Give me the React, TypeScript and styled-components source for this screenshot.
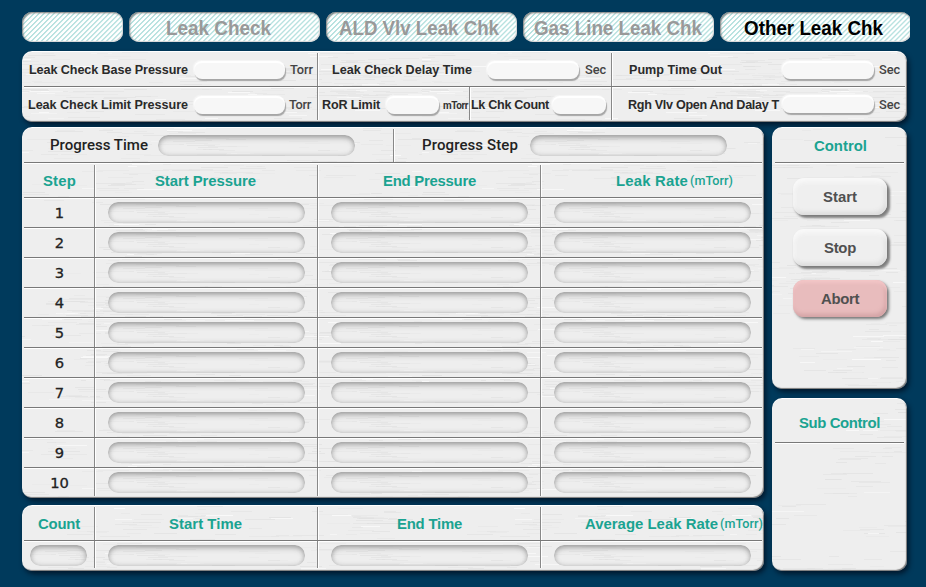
import React, { useLayoutEffect, useRef, useState } from "react";
import styled, { createGlobalStyle, css } from "styled-components";

/** Brushed-metal tile: short one-pixel streaks gathered in loose clusters. */
const brushed = (seed: number) => {
  let state = seed * 7919 + 17;
  const rnd = () => {
    state = (state * 1103515245 + 12345) % 2147483648;
    return state / 2147483648;
  };
  let streaks = "";
  for (let c = 0; c < 110; c++) {
    const cx = rnd() * 400;
    const cy = rnd() * 300;
    for (let i = 0; i < 7; i++) {
      const x = Math.round(cx + (rnd() - 0.5) * 50);
      const y = Math.round(cy + (rnd() - 0.5) * 22);
      const w = Math.round(8 + rnd() * 24);
      const light = rnd() < 0.14;
      const opacity = (light ? 0.25 + rnd() * 0.4 : 0.2 + rnd() * 0.5).toFixed(2);
      streaks += `<rect x='${x}' y='${y}' width='${w}' height='1' fill='${light ? "#fff" : "#e0e0e0"}' opacity='${opacity}'/>`;
    }
  }
  const svg = `<svg xmlns='http://www.w3.org/2000/svg' width='400' height='300'>${streaks}</svg>`;
  return `url("data:image/svg+xml,${encodeURIComponent(svg)}")`;
};

const slotTexture = brushed(31);

const GlobalStyle = createGlobalStyle`
  html, body { margin: 0; background: #003a5c; overflow: hidden; }
  * { box-sizing: border-box; }
`;

const Screen = styled.div`
  width: 926px;
  height: 587px;
  padding: 12px 16px 0 22px;
  background: #003a5c;
  font-family: "Liberation Sans", Arial, sans-serif;
  overflow: hidden;
`;

const Tabs = styled.nav`
  display: grid;
  grid-template-columns: 101px repeat(4, 191px);
  column-gap: 6px;
  height: 30px;
  width: 888px;
  overflow: hidden;
`;

const Tab = styled.button<{ $active?: boolean; $shift?: number }>`
  display: flex;
  justify-content: center;
  align-items: center;
  padding: 1px ${(p) => p.$shift ?? 0}px 0 0;
  border: 0;
  border-radius: 10px;
  background: repeating-linear-gradient(135deg, #fff 0 1.75px, #b9e2e0 2.1px 3.1px, #fff 3.54px);
  box-shadow: inset 1px 1px 2px #777, inset -1px -1px 1px #ddd;
  color: ${(p) => (p.$active ? "#000" : "#999")};
  font: bold 20px/28px "Liberation Sans", Arial, sans-serif;
`;

const Panel = styled.section<{ $seed: number }>`
  padding: 2px 2px 0;
  border-radius: 10px;
  background: ${(p) => brushed(p.$seed)}, #eee;
  box-shadow: inset 0 1px 0 #fff, inset -1px -1px 1px #777, 2px 3px 5px rgba(0, 12, 28, 0.75);
`;

const Settings = styled(Panel)`
  width: 885px;
  height: 71px;
  margin-top: 9px;
`;

const Body = styled.main`
  display: grid;
  grid-template-columns: 742px 135px;
  column-gap: 8px;
  margin-top: 5px;
`;

const Stack = styled.div`
  display: flex;
  flex-direction: column;
`;

const Results = styled(Panel)`
  height: 371px;
`;

const Totals = styled(Panel)`
  height: 66px;
  margin-top: 7px;
`;

const Controls = styled(Panel)`
  height: 262px;
`;

const SubControls = styled(Panel)`
  height: 173px;
  margin-top: 9px;
`;

const Row = styled.div<{ $cols: string; $h: number; $last?: boolean; $inset?: number }>`
  display: grid;
  grid-template-columns: ${(p) => p.$cols};
  height: ${(p) => p.$h}px;
  padding-top: ${(p) => p.$inset ?? 0}px;
  ${(p) =>
    !p.$last &&
    css`
      border-bottom: 1px solid #787878;
      box-shadow: 0 1px 0 #fff;
    `}
`;

const Cell = styled.div<{ $center?: boolean; $top?: number }>`
  display: flex;
  align-items: center;
  justify-content: ${(p) => (p.$center ? "center" : "flex-start")};
  padding-top: ${(p) => p.$top ?? 0}px;
  min-width: 0;
  &:not(:last-child) {
    border-right: 1px solid #888;
    box-shadow: 1px 0 0 #fff;
  }
`;

type Tone = "tab" | "label" | "unit" | "tiny" | "progress" | "heading" | "headingUnit" | "action";

const tones: Record<Tone, ReturnType<typeof css>> = {
  tab: css``,
  label: css`
    color: #2a2a2a;
    font: bold 12.6px/16px "Liberation Sans", Arial, sans-serif;
  `,
  unit: css`
    color: #444;
    font: 500 12.8px/16px Roboto, sans-serif;
  `,
  tiny: css`
    color: #333;
    font: bold 10px/14px Roboto, sans-serif;
    padding-top: 2px;
  `,
  progress: css`
    color: #222;
    font: 500 15px/18px Roboto, sans-serif;
    padding-bottom: 2px;
  `,
  heading: css`
    color: #1aa391;
    font: bold 14.9px/18px "Liberation Sans", Arial, sans-serif;
  `,
  headingUnit: css`
    color: #1aa391;
    font: 500 12.6px/18px Roboto, sans-serif;
  `,
  action: css`
    color: #505050;
    font: bold 14.9px/18px "Liberation Sans", Arial, sans-serif;
  `,
};

const TextBox = styled.span<{ $tone: Tone; $w: number; $ml: number }>`
  flex: none;
  width: ${(p) => p.$w}px;
  margin-left: ${(p) => p.$ml}px;
  text-align: left;
  white-space: nowrap;
  ${(p) => tones[p.$tone]}
`;

const TextRun = styled.span`
  display: inline-block;
  transform-origin: 0 50%;
`;

/** Text fitted to the given width: tabs are condensed, everything else is tracked. */
function Text({ tone, w, ml = 0, children }: { tone: Tone; w: number; ml?: number; children: string }) {
  const ref = useRef<HTMLSpanElement>(null);
  const [natural, setNatural] = useState(w);
  useLayoutEffect(() => {
    if (ref.current) setNatural(ref.current.getBoundingClientRect().width);
  }, []);
  const fit =
    tone === "tab"
      ? { transform: `scaleX(${w / natural})` }
      : { letterSpacing: (w - natural) / children.length };
  return (
    <TextBox $tone={tone} $w={w} $ml={ml}>
      <TextRun ref={ref} style={fit}>{children}</TextRun>
    </TextBox>
  );
}

const Field = styled.input<{ $w: number; $ml: number; $up?: number }>`
  flex: none;
  width: ${(p) => p.$w}px;
  height: 18px;
  margin: 0 0 ${(p) => p.$up ?? 0}px ${(p) => p.$ml}px;
  padding: 0 8px;
  border: 0;
  outline: 0;
  border-radius: 8px;
  background: #f7f7f7;
  box-shadow: inset 0 2px 1px #fff, 1px 2px 1px #a6a6a6, -1px -1px 1px #f6f6f6;
`;

const Slot = styled.output<{ $w?: number; $ml?: number }>`
  flex: none;
  width: ${(p) => p.$w ?? 197}px;
  height: 21px;
  margin-left: ${(p) => p.$ml ?? 13}px;
  border-radius: 10px;
  background: ${slotTexture}, #eee;
  box-shadow: inset 0 4px 6px -2px #999, inset 0 0 5px #b8b8b8;
`;

const StepNumber = styled.span`
  padding-left: 1px;
  color: #222;
  font: 14.7px/18px "DejaVu Sans", sans-serif;
  -webkit-text-stroke: 0.3px #222;
`;

const Action = styled.button<{ $danger?: boolean }>`
  display: flex;
  justify-content: center;
  align-items: center;
  width: 94px;
  height: 37px;
  padding: 1px 0 0;
  border: 0;
  border-radius: 11px;
  background: ${(p) => (p.$danger ? "#e8bcbd" : "#efefef")};
  box-shadow: ${(p) =>
    p.$danger
      ? "inset 0 3px 3px #f2c5c6, inset -2px -3px 4px #d3a3a5, 2px 2px 3px #777"
      : "inset 1px 4px 4px #f9f9f9, inset -2px -3px 4px #dcdcdc, 2px 2px 3px #777, 3px 3px 2px #aaa"};
`;

const ActionList = styled.div`
  display: flex;
  flex-direction: column;
  gap: 14px;
  padding: 15px 0 0 19px;
`;

const SideRow = styled(Row)`
  margin: 0 1px;
`;

const columns = "71px 223px 223px 221px";
const steps = [1, 2, 3, 4, 5, 6, 7, 8, 9, 10];

export default function App() {
  return (
    <>
      <GlobalStyle />
      <Screen>
        <Tabs>
          <Tab />
          <Tab $shift={12}><Text tone="tab" w={105}>Leak Check</Text></Tab>
          <Tab $shift={5}><Text tone="tab" w={160}>ALD Vlv Leak Chk</Text></Tab>
          <Tab $shift={1}><Text tone="tab" w={168}>Gas Line Leak Chk</Text></Tab>
          <Tab $active $shift={4}><Text tone="tab" w={139}>Other Leak Chk</Text></Tab>
        </Tabs>

        <Settings $seed={3}>
          <Row $cols="294px 294px 293px" $h={34}>
            <Cell>
              <Text tone="label" w={159} ml={5}>Leak Check Base Pressure</Text>
              <Field aria-label="Leak Check Base Pressure" $w={91} $ml={6} />
              <Text tone="unit" w={23} ml={5}>Torr</Text>
            </Cell>
            <Cell>
              <Text tone="label" w={140} ml={14}>Leak Check Delay Time</Text>
              <Field aria-label="Leak Check Delay Time" $w={92} $ml={15} />
              <Text tone="unit" w={21} ml={6}>Sec</Text>
            </Cell>
            <Cell>
              <Text tone="label" w={93} ml={17}>Pump Time Out</Text>
              <Field aria-label="Pump Time Out" $w={92} $ml={60} />
              <Text tone="unit" w={21} ml={5}>Sec</Text>
            </Cell>
          </Row>
          <Row $cols="294px 152px 142px 293px" $h={33} $last>
            <Cell $top={2}>
              <Text tone="label" w={160} ml={4}>Leak Check Limit Pressure</Text>
              <Field aria-label="Leak Check Limit Pressure" $w={91} $ml={6} />
              <Text tone="unit" w={22} ml={4}>Torr</Text>
            </Cell>
            <Cell $top={2}>
              <Text tone="label" w={58} ml={4}>RoR Limit</Text>
              <Field aria-label="RoR Limit" $w={53} $ml={6} />
              <Text tone="tiny" w={25} ml={4}>mTorr</Text>
            </Cell>
            <Cell $top={2}>
              <Text tone="label" w={78} ml={1}>Lk Chk Count</Text>
              <Field aria-label="Lk Chk Count" $w={54} $ml={3} />
            </Cell>
            <Cell $top={2}>
              <Text tone="label" w={151} ml={16}>Rgh Vlv Open And Dalay T</Text>
              <Field aria-label="Rgh Vlv Open And Dalay T" $w={92} $ml={3} $up={2} />
              <Text tone="unit" w={21} ml={5}>Sec</Text>
            </Cell>
          </Row>
        </Settings>

        <Body>
          <Stack>
            <Results $seed={11}>
              <Row $cols="370px 368px" $h={34}>
                <Cell>
                  <Text tone="progress" w={98} ml={26}>Progress Time</Text>
                  <Slot $ml={10} />
                </Cell>
                <Cell>
                  <Text tone="progress" w={96} ml={28}>Progress Step</Text>
                  <Slot $ml={12} />
                </Cell>
              </Row>
              <Row $cols={columns} $h={35} $inset={2}>
                <Cell><Text tone="heading" w={33} ml={19}>Step</Text></Cell>
                <Cell><Text tone="heading" w={101} ml={60}>Start Pressure</Text></Cell>
                <Cell><Text tone="heading" w={93} ml={65}>End Pressure</Text></Cell>
                <Cell>
                  <Text tone="heading" w={72} ml={75}>Leak Rate</Text>
                  <Text tone="headingUnit" w={43} ml={2}>(mTorr)</Text>
                </Cell>
              </Row>
              {steps.map((n) => (
                <Row key={n} $cols={columns} $h={n === 10 ? 28 : 30} $last={n === 10}>
                  <Cell $center $top={n === 10 ? 1 : 0}><StepNumber>{n}</StepNumber></Cell>
                  <Cell $top={n === 10 ? 1 : 0}><Slot /></Cell>
                  <Cell $top={n === 10 ? 1 : 0}><Slot /></Cell>
                  <Cell $top={n === 10 ? 1 : 0}><Slot /></Cell>
                </Row>
              ))}
            </Results>
            <Totals $seed={17}>
              <Row $cols={columns} $h={34}>
                <Cell><Text tone="heading" w={42} ml={14}>Count</Text></Cell>
                <Cell><Text tone="heading" w={73} ml={74}>Start Time</Text></Cell>
                <Cell><Text tone="heading" w={65} ml={79}>End Time</Text></Cell>
                <Cell>
                  <Text tone="heading" w={133} ml={44}>Average Leak Rate</Text>
                  <Text tone="headingUnit" w={43} ml={2}>(mTorr)</Text>
                </Cell>
              </Row>
              <Row $cols={columns} $h={27} $last>
                <Cell $top={2}><Slot $w={57} $ml={6} /></Cell>
                <Cell $top={2}><Slot /></Cell>
                <Cell $top={2}><Slot /></Cell>
                <Cell $top={2}><Slot /></Cell>
              </Row>
            </Totals>
          </Stack>
          <Stack>
            <Controls $seed={23}>
              <SideRow $cols="129px" $h={34}>
                <Cell $top={1}><Text tone="heading" w={53} ml={39}>Control</Text></Cell>
              </SideRow>
              <ActionList>
                <Action><Text tone="action" w={34}>Start</Text></Action>
                <Action><Text tone="action" w={32}>Stop</Text></Action>
                <Action $danger><Text tone="action" w={38}>Abort</Text></Action>
              </ActionList>
            </Controls>
            <SubControls $seed={29}>
              <SideRow $cols="129px" $h={43}>
                <Cell $top={4}><Text tone="heading" w={81} ml={24}>Sub Control</Text></Cell>
              </SideRow>
            </SubControls>
          </Stack>
        </Body>
      </Screen>
    </>
  );
}
